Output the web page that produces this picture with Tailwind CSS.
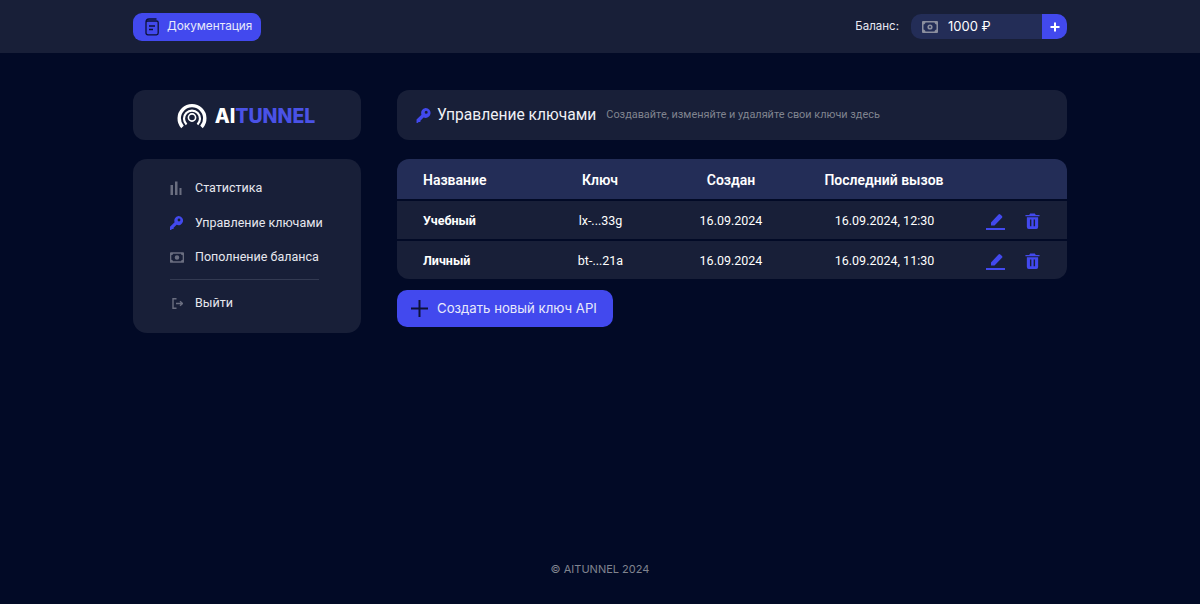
<!DOCTYPE html>
<html lang="ru">
  <head>
    <meta charset="UTF-8" />
    <title>AITUNNEL - Управление ключами</title>
    <script src="https://cdn.jsdelivr.net/npm/@tailwindcss/browser@4"></script>
  </head>
  <body class="w-[1200px] h-[604px] overflow-hidden bg-[#020a26] text-white font-['Roboto',sans-serif] flex flex-col">
    <!-- header -->
    <header class="h-[53px] shrink-0 bg-[#181f38] px-[133px] flex items-center justify-between">
      <a class="w-[128px] h-[28px] rounded-[9px] bg-[#4249ee] flex items-center pl-[11px] gap-[7px] font-['Inter',sans-serif] text-[11.8px] text-[#e8e9fb]">
        <svg class="w-[16px] h-[18px]" viewBox="0 0 16 18" fill="none" stroke="#0d1238" stroke-width="1.3">
          <path d="M2 4 C2 2 3 1 5 1 H12.5 M2 4.5 C2 3.4 3 3 4 3 H12.5 C13.6 3 14.2 3.6 14.2 4.6 V15 C14.2 16 13.6 16.8 12.5 16.8 H4 C2.8 16.8 2 16 2 15 Z" />
          <path d="M5 8 H11 M5 11.5 H9" />
        </svg>
        Документация
      </a>
      <div class="flex items-center font-['Inter',sans-serif]">
        <span class="text-[11.5px] text-[#e8e9f2] mr-[12px]">Баланс:</span>
        <div class="w-[156px] h-[25px] rounded-[10px] bg-[#232d57] overflow-hidden flex items-center">
          <svg class="ml-[11px] w-[16px] h-[12px]" viewBox="0 0 16 12" fill="#8b8f9f">
            <path fill-rule="evenodd" d="M1 0 H15 A1 1 0 0 1 16 1 V11 A1 1 0 0 1 15 12 H1 A1 1 0 0 1 0 11 V1 A1 1 0 0 1 1 0 Z M3.5 1.6 C3.2 2.7 2.7 3.2 1.5 3.5 V8.5 C2.7 8.8 3.2 9.3 3.5 10.4 H12.5 C12.8 9.3 13.3 8.8 14.5 8.5 V3.5 C13.3 3.2 12.8 2.7 12.5 1.6 Z M8 3.4 A2.6 2.6 0 1 1 8 8.6 A2.6 2.6 0 1 1 8 3.4 Z M8 5 A1 1 0 1 0 8 7 A1 1 0 1 0 8 5 Z" />
          </svg>
          <span class="ml-[10px] text-[13px] text-white">1000 ₽</span>
          <span class="ml-auto w-[25px] h-full bg-[#4249ee] flex items-center justify-center">
            <svg class="w-[10px] h-[10px]" viewBox="0 0 10 10" stroke="#fff" stroke-width="2"><path d="M5 0.5 V9.5 M0.5 5 H9.5" /></svg>
          </span>
        </div>
      </div>
    </header>

    <main class="flex-1 px-[133px] pt-[37px] flex gap-[36px] items-start">
      <!-- sidebar -->
      <aside class="w-[228px] shrink-0 flex flex-col gap-[19px]">
        <div class="h-[50px] rounded-[12px] bg-[#181f38] flex items-center justify-center gap-[8px]">
          <svg class="w-[30px] h-[27px] -ml-[2px]" viewBox="0 0 30 27" fill="none" stroke="#fff">
            <path stroke-width="3.4" d="M5.5 25 A12.8 12.8 0 1 1 24.5 25" />
            <path stroke-width="2.2" d="M9.5 22.5 A8 8 0 1 1 20.5 22.5" />
            <circle cx="15" cy="15.5" r="3.6" stroke-width="1.6" />
          </svg>
          <span class="pt-[3px] font-['Inter',sans-serif] font-extrabold text-[19.5px] text-white">AI<span class="text-[#4a52e6]">TUNNEL</span></span>
        </div>
        <nav class="h-[174px] rounded-[14px] bg-[#181f38] pl-[37px] pr-[42px] pt-[12px] text-[12.5px] text-[#e6e7ee] whitespace-nowrap">
          <div class="h-[34px] flex items-center">
            <svg class="shrink-0 w-[12px] h-[14px] mr-[13px]" viewBox="0 0 12 14" fill="#6a6e80"><rect x="0.5" y="4" width="2.5" height="10" /><rect x="5" y="0.5" width="2.5" height="13.5" /><rect x="9.5" y="7" width="2" height="7" /></svg>
            Статистика
          </div>
          <div class="h-[35px] pt-[1px] flex items-center">
            <svg class="shrink-0 w-[13px] h-[14px] mr-[12px]" viewBox="0 0 13 14" fill="#4249ee"><path fill-rule="evenodd" d="M8.4 0 A4.6 4.6 0 1 1 6.6 8.8 L3.6 11.8 V13 H2 L1 14 H0 V10.8 L4.6 6.2 A4.6 4.6 0 0 1 8.4 0 Z M9 2.6 A1.4 1.4 0 1 0 9 5.4 A1.4 1.4 0 1 0 9 2.6 Z" /></svg>
            Управление ключами
          </div>
          <div class="h-[34px] flex items-center">
            <svg class="shrink-0 w-[14px] h-[11px] mr-[11px]" viewBox="0 0 16 12" fill="#6a6e80"><path fill-rule="evenodd" d="M1 0 H15 A1 1 0 0 1 16 1 V11 A1 1 0 0 1 15 12 H1 A1 1 0 0 1 0 11 V1 A1 1 0 0 1 1 0 Z M3.5 1.6 C3.2 2.7 2.7 3.2 1.5 3.5 V8.5 C2.7 8.8 3.2 9.3 3.5 10.4 H12.5 C12.8 9.3 13.3 8.8 14.5 8.5 V3.5 C13.3 3.2 12.8 2.7 12.5 1.6 Z M8 3.4 A2.6 2.6 0 1 1 8 8.6 A2.6 2.6 0 1 1 8 3.4 Z" /></svg>
            Пополнение баланса
          </div>
          <div class="h-px bg-[#333a52] mt-[5px] mb-[6px]"></div>
          <div class="h-[34px] pt-[1px] flex items-center">
            <svg class="shrink-0 w-[11px] h-[11px] mr-[12px] ml-[2px]" viewBox="0 0 11 11" fill="none" stroke="#6a6e80" stroke-width="1.4"><path d="M4.5 0.8 H1 V10.2 H4.5" /><path d="M4 5.5 H10.5 M8 3.2 L10.5 5.5 L8 7.8" /></svg>
            Выйти
          </div>
        </nav>
      </aside>

      <!-- content -->
      <section class="w-[670px] flex flex-col">
        <div class="h-[50px] rounded-[12px] bg-[#181f38] flex items-center pl-[19px] mb-[19px]">
          <svg class="shrink-0 w-[15px] h-[15px] mr-[6px]" viewBox="0 0 13 14" fill="#4249ee"><path fill-rule="evenodd" d="M8.4 0 A4.6 4.6 0 1 1 6.6 8.8 L3.6 11.8 V13 H2 L1 14 H0 V10.8 L4.6 6.2 A4.6 4.6 0 0 1 8.4 0 Z M9 2.6 A1.4 1.4 0 1 0 9 5.4 A1.4 1.4 0 1 0 9 2.6 Z" /></svg>
          <h1 class="pt-[1px] text-[15.6px] text-[#f0f1f6]">Управление ключами</h1>
          <p class="pt-[1px] ml-[10px] text-[10.9px] text-[#80848f]">Создавайте, изменяйте и удаляйте свои ключи здесь</p>
        </div>

        <div class="rounded-[12px] overflow-hidden flex flex-col gap-[2px]">
          <div class="h-[40px] pt-[2px] bg-[#232d57] grid grid-cols-[130px_145px_117px_190px_88px] items-center text-[14px] font-semibold text-center">
            <span class="text-left pl-[26px]">Название</span>
            <span class="pl-[1px]">Ключ</span>
            <span class="pl-[1px]">Создан</span>
            <span>Последний вызов</span>
            <span></span>
          </div>
          <div class="h-[38px] pt-[2px] bg-[#181f38] grid grid-cols-[130px_145px_117px_190px_88px] items-center text-[12.5px] text-center">
            <span class="text-left pl-[26px] font-bold">Учебный</span>
            <span class="pl-[2px]">lx-...33g</span>
            <span class="pl-[1px]">16.09.2024</span>
            <span class="pl-[1px]">16.09.2024, 12:30</span>
            <div class="flex items-center gap-[20px] pl-[7px]">
              <svg class="w-[19px] h-[18px]" viewBox="0 0 19 18" fill="#4249ee"><path d="M5 10.5 L12.5 2.5 Q13.4 1.7 14.3 2.5 L16 4 Q16.8 5 16 5.8 L8.5 13.5 L5 13.5 Z" /><rect x="0" y="16" width="19" height="2" /></svg>
              <svg class="w-[15px] h-[16px]" viewBox="0 0 15 17" fill="#4249ee"><path fill-rule="evenodd" d="M5 0.5 H10 L11 2 H15 V3.5 H0 V2 H4 Z M1.5 4.5 H13.5 V15 Q13.5 17 11.5 17 H3.5 Q1.5 17 1.5 15 Z M4.8 7 V14 H6.3 V7 Z M8.7 7 V14 H10.2 V7 Z" /></svg>
            </div>
          </div>
          <div class="h-[38px] pt-[2px] bg-[#181f38] grid grid-cols-[130px_145px_117px_190px_88px] items-center text-[12.5px] text-center">
            <span class="text-left pl-[26px] font-bold">Личный</span>
            <span class="pl-[2px]">bt-...21a</span>
            <span class="pl-[1px]">16.09.2024</span>
            <span class="pl-[1px]">16.09.2024, 11:30</span>
            <div class="flex items-center gap-[20px] pl-[7px]">
              <svg class="w-[19px] h-[18px]" viewBox="0 0 19 18" fill="#4249ee"><path d="M5 10.5 L12.5 2.5 Q13.4 1.7 14.3 2.5 L16 4 Q16.8 5 16 5.8 L8.5 13.5 L5 13.5 Z" /><rect x="0" y="16" width="19" height="2" /></svg>
              <svg class="w-[15px] h-[16px]" viewBox="0 0 15 17" fill="#4249ee"><path fill-rule="evenodd" d="M5 0.5 H10 L11 2 H15 V3.5 H0 V2 H4 Z M1.5 4.5 H13.5 V15 Q13.5 17 11.5 17 H3.5 Q1.5 17 1.5 15 Z M4.8 7 V14 H6.3 V7 Z M8.7 7 V14 H10.2 V7 Z" /></svg>
            </div>
          </div>
        </div>

        <button class="mt-[11px] w-[216px] h-[37px] rounded-[10px] bg-[#4249ee] flex items-center pl-[14px] gap-[9px] font-['Inter',sans-serif] text-[13.2px] text-[#e8e9fb]">
          <svg class="w-[17px] h-[17px]" viewBox="0 0 17 17" stroke="#0d1238" stroke-width="2"><path d="M8.5 0 V17 M0 8.5 H17" /></svg>
          Создать новый ключ API
        </button>
      </section>
    </main>

    <footer class="h-[70px] shrink-0 pt-[27px] font-['Inter',sans-serif] text-[11px] text-[#80848f] text-center">© AITUNNEL 2024</footer>
  </body>
</html>
